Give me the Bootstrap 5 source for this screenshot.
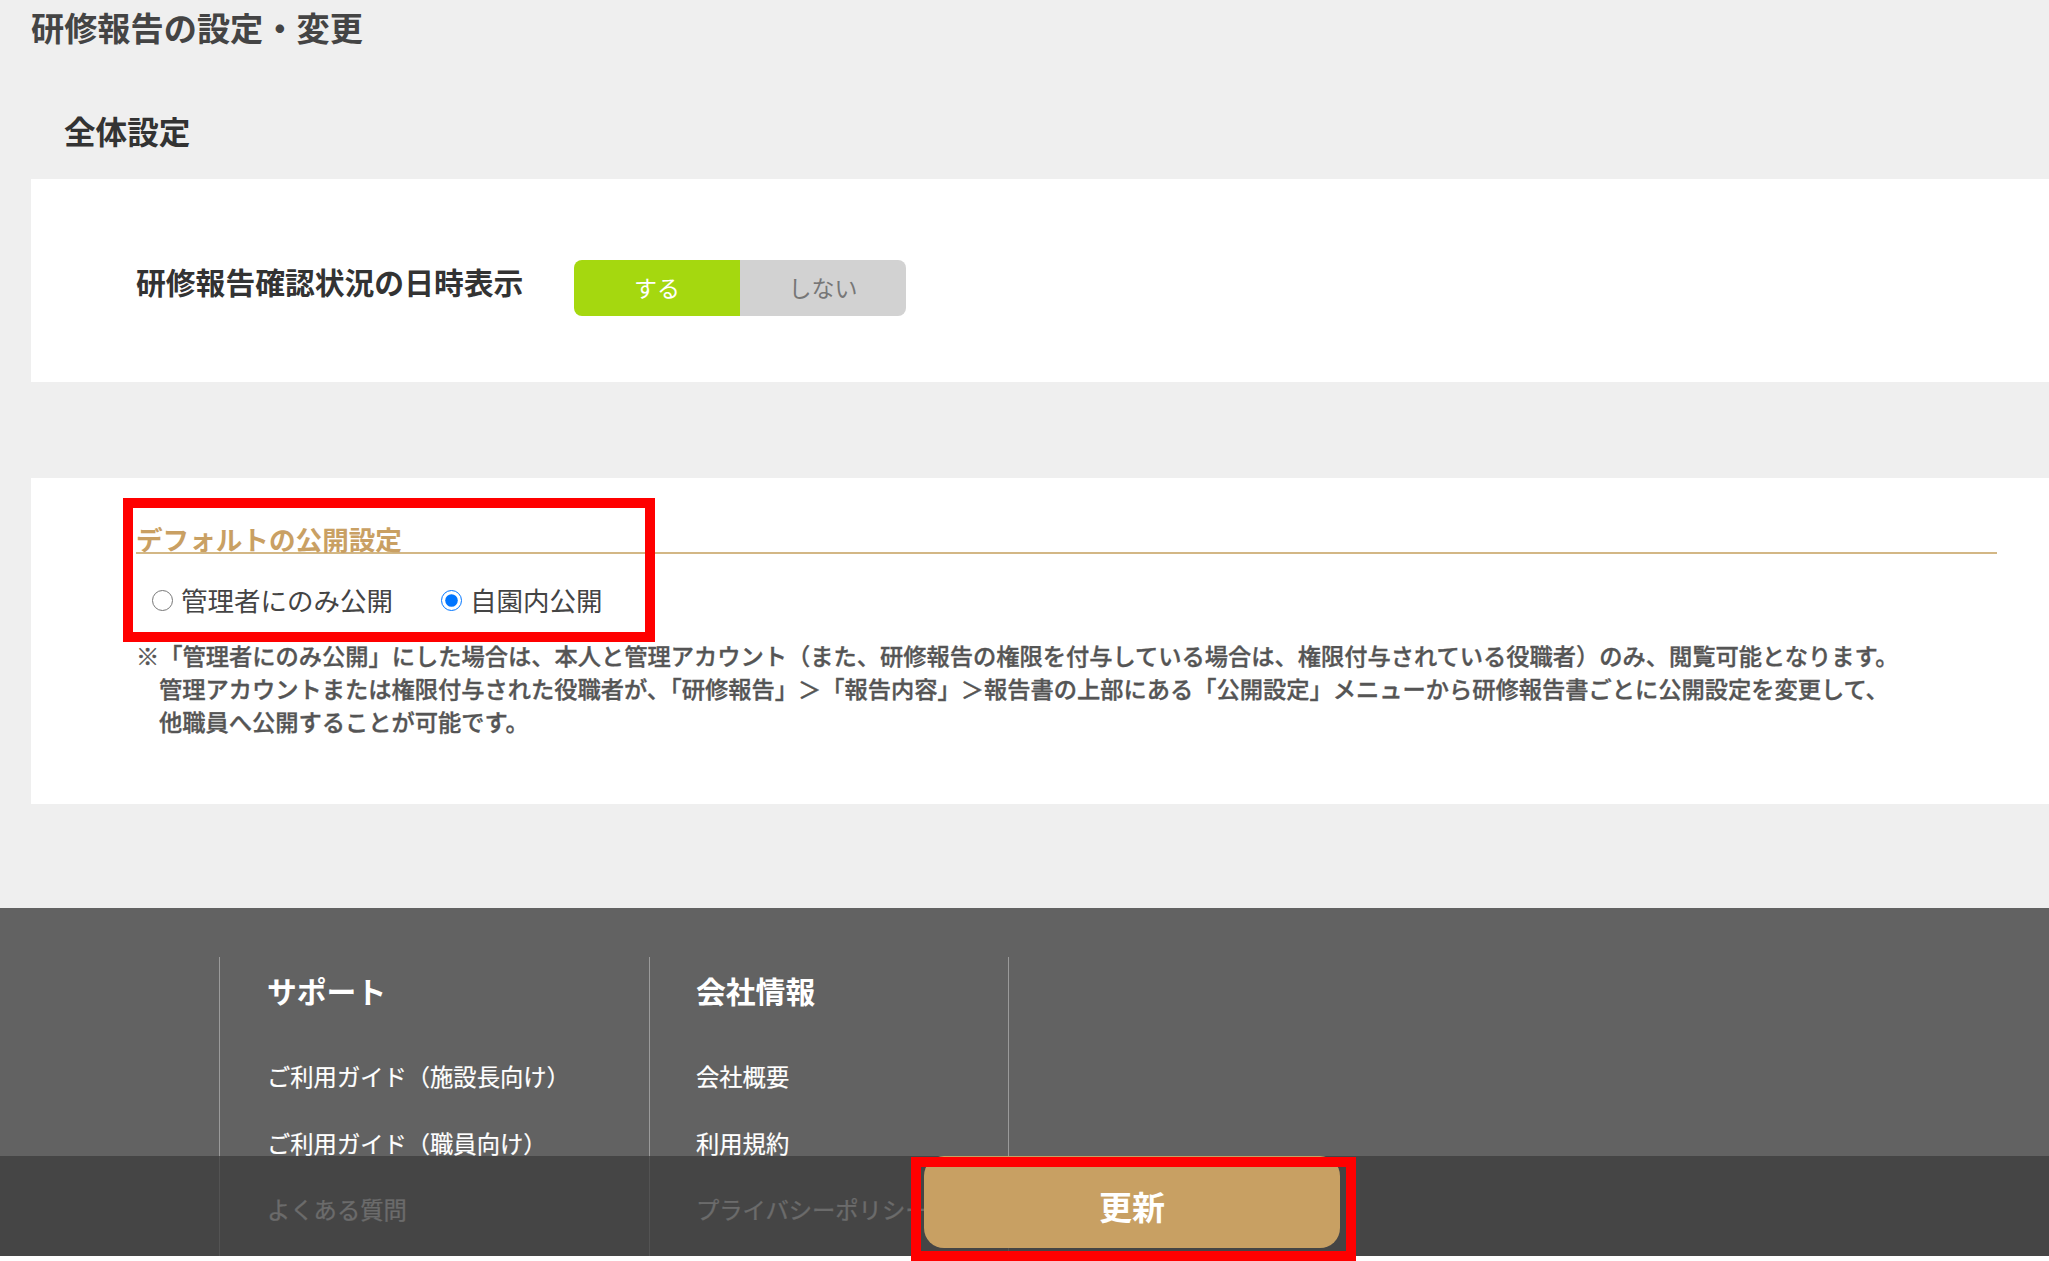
<!DOCTYPE html>
<html lang="ja">
<head>
    <meta charset="UTF-8">
    <meta name="viewport" content="width=device-width, initial-scale=1.0">
    <title>研修報告の設定・変更</title>
    <link href="https://cdn.jsdelivr.net/npm/bootstrap@5.3.0/dist/css/bootstrap.min.css" rel="stylesheet">
    <style>
        html { background-color: #fff; }
        body {
            background-color: #fff;
            color: #444;
            font-family: "Noto Sans CJK JP", "Liberation Sans", sans-serif;
        }
        .page-frame {
            position: relative;
            height: 1256px;
            overflow: hidden;
            background-color: #efefef;
        }
        .page-title {
            margin: 0;
            padding: 5px 0 0 31px;
            font-size: 33.2px;
            line-height: 44px;
            font-weight: 700;
            color: #444;
        }
        .section-title {
            margin: 0;
            padding: 59px 0 0 64px;
            font-size: 31.6px;
            line-height: 44px;
            font-weight: 700;
            color: #333;
        }
        .panel-one {
            margin: 27px 0 0 31px;
            height: 203px;
            padding: 81px 0 0 105px;
            background-color: #fff;
        }
        .row-label {
            width: 438px;
            margin-top: -7px;
            font-size: 29.8px;
            line-height: 56px;
            font-weight: 700;
            color: #333;
        }
        .toggle-pair { width: 332px; height: 56px; border-radius: 8px; overflow: hidden; }
        .toggle-on, .toggle-off {
            width: 50%;
            font-size: 23px;
            line-height: 54px;
            text-align: center;
        }
        .toggle-on { background-color: #a5d80f; color: #fff; }
        .toggle-off { background-color: #d2d2d2; color: #777; }
        .panel-two {
            margin: 96px 0 0 31px;
            height: 326px;
            padding: 42px 52px 0 105px;
            background-color: #fff;
        }
        .sub-title {
            height: 34px;
            font-size: 26.6px;
            line-height: 38px;
            font-weight: 700;
            color: #c9a063;
            border-bottom: 2px solid #d3b785;
            white-space: nowrap;
        }
        .radio-row { padding: 27px 0 0 16px; gap: 48px; }
        .radio-item {
            gap: 8px;
            font-size: 26.5px;
            line-height: 38px;
            color: #444;
        }
        .radio-item input {
            width: 21px;
            height: 21px;
            margin: 0;
            accent-color: #0075ff;
        }
        .note-text {
            margin: 20px 0 0;
            padding-left: 23px;
            text-indent: -23px;
            font-size: 23.25px;
            line-height: 33px;
            font-weight: 500;
            color: #555;
            white-space: nowrap;
            -webkit-text-stroke: .35px #555;
        }
        .site-footer {
            margin-top: 104px;
            height: 348px;
            padding: 49px 0 0 219px;
            background-color: #626262;
            color: #fff;
        }
        .footer-col {
            height: 299px;
            padding-left: 47px;
            border-left: 1px solid #9a9a9a;
        }
        .col-support { width: 430px; }
        .col-company { width: 360px; padding-left: 46px; border-right: 1px solid #9a9a9a; }
        .footer-head {
            margin: 0;
            padding-top: 11px;
            font-size: 29.8px;
            line-height: 44px;
            font-weight: 700;
        }
        .footer-links { margin: 31px 0 0; padding: 0; list-style: none; }
        .footer-links li {
            height: 66.5px;
            font-size: 23.3px;
            line-height: 66px;
            white-space: nowrap;
            -webkit-text-stroke: .2px #fff;
        }
        .save-bar {
            position: absolute;
            left: 0;
            right: 0;
            bottom: 0;
            height: 100px;
            background-color: rgba(60, 60, 60, .76);
        }
        .save-btn {
            position: absolute;
            left: 924px;
            top: 0;
            width: 416px;
            height: 92px;
            border: 0;
            border-radius: 20px;
            background-color: #c8a063;
            color: #fff;
            font-size: 33px;
            font-weight: 700;
            padding-top: 10px;
        }
        .mark-box {
            position: absolute;
            border: 10px solid #f00;
            pointer-events: none;
        }
        .mark-default { left: 123px; top: 498px; width: 532px; height: 144px; }
        .mark-save { left: 911px; top: 1157px; width: 445px; height: 104px; }
    </style>
</head>
<body>
    <div class="page-frame">
        <h1 class="page-title">研修報告の設定・変更</h1>
        <h2 class="section-title">全体設定</h2>

        <div class="panel-one d-flex align-items-start">
            <div class="row-label">研修報告確認状況の日時表示</div>
            <div class="toggle-pair d-flex">
                <div class="toggle-on">する</div>
                <div class="toggle-off">しない</div>
            </div>
        </div>

        <div class="panel-two">
            <div class="sub-title">デフォルトの公開設定</div>
            <div class="radio-row d-flex">
                <label class="radio-item d-flex align-items-center"><input type="radio" name="scope">管理者にのみ公開</label>
                <label class="radio-item d-flex align-items-center"><input type="radio" name="scope" checked>自園内公開</label>
            </div>
            <p class="note-text">※「管理者にのみ公開」にした場合は、本人と管理アカウント（また、研修報告の権限を付与している場合は、権限付与されている役職者）のみ、閲覧可能となります。<br>管理アカウントまたは権限付与された役職者が、「研修報告」＞「報告内容」＞報告書の上部にある「公開設定」メニューから研修報告書ごとに公開設定を変更して、<br>他職員へ公開することが可能です。</p>
        </div>

        <footer class="site-footer d-flex">
            <div class="footer-col col-support">
                <h3 class="footer-head">サポート</h3>
                <ul class="footer-links">
                    <li>ご利用ガイド（施設長向け）</li>
                    <li>ご利用ガイド（職員向け）</li>
                    <li>よくある質問</li>
                </ul>
            </div>
            <div class="footer-col col-company">
                <h3 class="footer-head">会社情報</h3>
                <ul class="footer-links">
                    <li>会社概要</li>
                    <li>利用規約</li>
                    <li>プライバシーポリシー</li>
                </ul>
            </div>
        </footer>

        <div class="save-bar">
            <button type="button" class="save-btn">更新</button>
        </div>
    </div>

    <div class="mark-box mark-default"></div>
    <div class="mark-box mark-save"></div>

    <script src="https://cdn.jsdelivr.net/npm/bootstrap@5.3.0/dist/js/bootstrap.bundle.min.js"></script>
</body>
</html>
